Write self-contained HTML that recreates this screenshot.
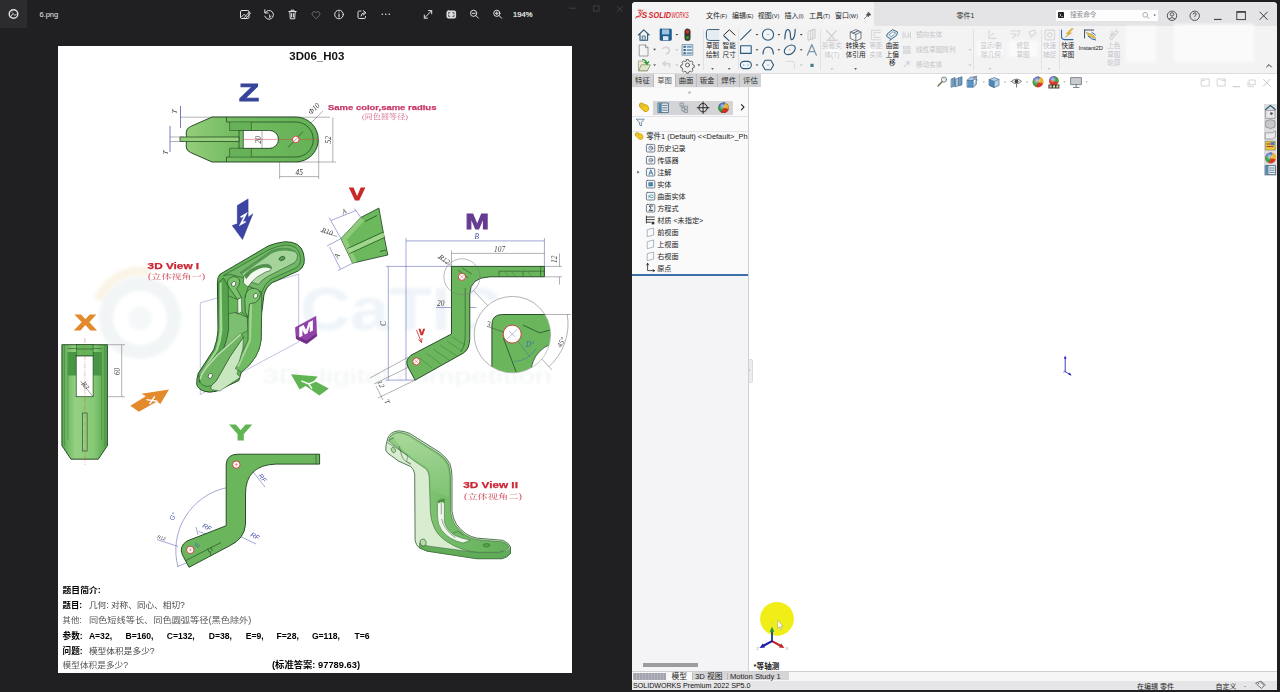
<!DOCTYPE html>
<html lang="zh">
<head>
<meta charset="utf-8">
<title>6.png</title>
<style>
html,body{margin:0;padding:0;background:#1f1f22;}
body{width:1280px;height:692px;overflow:hidden;position:relative;font-family:"Liberation Sans","Noto Sans CJK SC",sans-serif;}
.abs{position:absolute;}
#photos{position:absolute;left:0;top:0;width:632px;height:692px;background:#202023;overflow:hidden;}
#ptab{position:absolute;left:0;top:0;width:27px;height:28px;background:#2c2c2f;}
#pname{position:absolute;left:39.4px;top:9.8px;font-size:7.5px;color:#e8e8e8;letter-spacing:0;}
.pico{position:absolute;top:8px;width:14px;height:14px;}
.pico svg{width:14px;height:14px;display:block;fill:none;stroke:#e4e4e4;stroke-width:1.1;stroke-linecap:round;stroke-linejoin:round;}
#pzoom{position:absolute;left:513px;top:9.8px;font-size:7.6px;color:#f0f0f0;-webkit-text-stroke:0.2px #f0f0f0;}
#page{position:absolute;left:58px;top:46px;width:514px;height:627px;background:#fff;overflow:hidden;}
#sw{position:absolute;left:632px;top:2px;width:645px;height:688px;background:#fff;border-radius:4px 4px 0 0;overflow:hidden;}

#sw{font-family:"Liberation Sans","Noto Sans CJK SC",sans-serif;color:#222;}
#sw .t{position:absolute;white-space:nowrap;line-height:1;}
#swtitle{position:absolute;left:0;top:0;width:645px;height:24px;background:#e4e4e6;}
#swmenu{position:absolute;left:0;top:0;width:242px;height:24px;background:#f4f4f5;}
#swrib{position:absolute;left:0;top:24px;width:645px;height:47.5px;background:#f3f3f4;border-bottom:1px solid #dcdcde;box-sizing:border-box;}
.mn{font-size:7px;top:10.4px;color:#222;}
.mn small{font-size:5.6px;}
.rl{font-size:6.6px;color:#1c1c1c;text-align:center;transform:translateX(-50%);line-height:8.2px !important;}
.rg{color:#c4c4c8 !important;}
.sep{position:absolute;top:27px;width:1px;height:41px;background:#e2e2e4;}
.dd{position:absolute;width:0;height:0;border-left:1.6px solid transparent;border-right:1.6px solid transparent;border-top:1.8px solid #333;}
#swtabs{position:absolute;left:0;top:71.5px;width:129px;height:13px;background:#d2d2d4;}
#swtabs .tb{position:absolute;top:0;height:13px;font-size:7.4px;line-height:13.6px;text-align:center;color:#2a2a2a;border-right:1px solid #bcbcc0;box-sizing:border-box;}
#fm{position:absolute;left:0;top:84.5px;width:116px;height:584px;background:#f4f4f6;border-right:1px solid #d0d0d4;}
#fmtop{position:absolute;left:0;top:0;width:116px;height:187px;background:#fafafb;}
.ti{position:absolute;left:25.2px;font-size:7.15px;line-height:1;color:#222;white-space:nowrap;}
.tic{position:absolute;left:14.5px;width:8px;height:8px;box-sizing:border-box;border:1px solid #4a5a6a;border-radius:1.5px;background:#eef3f8;}
#swbot{position:absolute;left:0;top:669px;width:645px;height:9.6px;background:#f6f6f7;border-top:1px solid #cfcfd2;box-sizing:border-box;}
#swstat{position:absolute;left:0;top:678.6px;width:645px;height:9.4px;background:#e6e6e8;}
</style>
</head>
<body>
<!-- ================= PHOTOS WINDOW ================= -->
<div id="photos">
  <div id="ptab"></div>
  <svg class="abs" style="left:0;top:0" width="632" height="46" viewBox="0 0 632 46" fill="none" stroke="#e2e2e2" stroke-width="1" stroke-linecap="round" stroke-linejoin="round">
  <!-- app icon -->
  <circle cx="13.5" cy="14" r="4.3" stroke-width="1.4"/>
  <path d="M10.5 17 L13 13.5 L15 15.5 L16.5 14 M12 12 h0.1" stroke-width="0.9"/>
  <!-- edit image -->
  <rect x="240.5" y="10.5" width="8.5" height="8" rx="1.3"/>
  <path d="M241.5 17 L244 14.2 L246 16.2 M245.5 18.8 L250.5 13.2 L249.2 12 L244.4 17.4 Z" stroke-width="0.9"/>
  <!-- rotate -->
  <path d="M265.2 12.6 A4.4 4.4 0 1 1 264.8 16.2 M264.8 9.8 V13 H268"/>
  <path d="M269.6 14.8 V17.6 L271.2 16.2" stroke-width="0.9"/>
  <!-- trash -->
  <path d="M288.8 11.5 H296.2 M291 11.5 V10.2 H294 V11.5 M289.8 11.5 L290.3 18.8 H294.7 L295.2 11.5 M291.6 13.5 V17 M293.4 13.5 V17"/>
  <!-- heart (dim) -->
  <path d="M316 18.6 L312.5 15.2 A2.1 2.1 0 0 1 316 12.6 A2.1 2.1 0 0 1 319.5 15.2 Z" stroke="#6a6a6e"/>
  <!-- info -->
  <circle cx="339" cy="14.5" r="4.3"/>
  <path d="M339 14 V17 M339 12 v0.1" stroke-width="1.1"/>
  <!-- share -->
  <path d="M361 11 H359.3 Q358 11 358 12.3 V17.2 Q358 18.5 359.3 18.5 H364.2 Q365.5 18.5 365.5 17.2 V16.5"/>
  <path d="M361 16 Q361.3 12.8 364.3 12.8 M363.2 10.6 L366 12.8 L363.2 15"/>
  <!-- more -->
  <g fill="#e2e2e2" stroke="none"><circle cx="382.3" cy="14.3" r="0.8"/><circle cx="385.8" cy="14.3" r="0.8"/><circle cx="389.3" cy="14.3" r="0.8"/></g>
  <!-- expand -->
  <path d="M424.5 18 L431.5 10.8 M428.5 10.6 H431.7 V13.8 M424.3 15 V18.2 H427.5"/>
  <!-- fit -->
  <rect x="447" y="11" width="8.6" height="7" rx="1.2" fill="#dcdcdc"/>
  <path d="M448.6 13.8 V12.6 H449.8 M454 15.2 V16.4 H452.8 M452.8 12.6 H454 V13.8 M448.6 15.2 V16.4 H449.8" stroke="#222" stroke-width="0.7"/>
  <!-- zoom out -->
  <circle cx="473.6" cy="13.3" r="3.1"/><path d="M475.9 15.6 L478.4 18.2 M472.2 13.3 H475"/>
  <!-- zoom in -->
  <circle cx="496.8" cy="13.3" r="3.1"/><path d="M499.1 15.6 L501.6 18.2 M495.4 13.3 H498.2 M496.8 11.9 V14.7"/>
  <!-- window controls (dim) -->
  <g stroke="#424246" stroke-width="0.9">
    <path d="M569.5 8.2 H575.5"/>
    <rect x="593.8" y="5.8" width="5.4" height="5.4"/>
    <path d="M617 6.2 L622.4 11.6 M622.4 6.2 L617 11.6"/>
  </g>
</svg>

  <div id="pname">6.png</div>
  <div id="pzoom">194%</div>
  <div id="page">
  <svg class="abs" style="left:0;top:0" width="514" height="627" viewBox="58 46 514 627">
<defs>
<linearGradient id="gz" x1="0" y1="0" x2="1" y2="0"><stop offset="0" stop-color="#8fd070"/><stop offset="0.35" stop-color="#6cbf56"/><stop offset="1" stop-color="#5bb54a"/></linearGradient>
<linearGradient id="gx" x1="0" y1="0" x2="1" y2="0"><stop offset="0" stop-color="#4fae44"/><stop offset="0.3" stop-color="#8fd47a"/><stop offset="0.7" stop-color="#7fcc6a"/><stop offset="1" stop-color="#4aa840"/></linearGradient>
<filter id="soft" x="-2%" y="-2%" width="104%" height="104%" color-interpolation-filters="sRGB"><feGaussianBlur stdDeviation="0.35"/><feColorMatrix type="saturate" values="0.86"/></filter>
<filter id="wm" x="-5%" y="-5%" width="110%" height="110%"><feGaussianBlur stdDeviation="1.6"/></filter>
</defs>
<!-- watermark -->
<g filter="url(#wm)" opacity="0.55">
  <circle cx="140" cy="318" r="34" fill="none" stroke="#e6eef0" stroke-width="14"/>
  <circle cx="140" cy="318" r="12" fill="#eef3f4"/>
  <path d="M98 300 A46 46 0 0 1 150 272" fill="none" stroke="#f6ecd2" stroke-width="9"/>
  <text x="300" y="330" font-family="Liberation Sans, sans-serif" font-weight="bold" font-size="62" fill="#e3ecf4" textLength="240" lengthAdjust="spacingAndGlyphs">CaTICs</text>
  <text x="262" y="383" font-family="Liberation Sans, sans-serif" font-size="21" fill="#e6eaee" textLength="290" lengthAdjust="spacingAndGlyphs">3D digital competition</text>
</g>
<g filter="url(#soft)">
<!-- title -->
<text x="316.8" y="59.6" text-anchor="middle" font-family="Liberation Sans, sans-serif" font-weight="bold" font-size="11.2" fill="#111" textLength="55" lengthAdjust="spacingAndGlyphs">3D06_H03</text>

<!-- ===== Z view ===== -->
<text x="239" y="100.6" font-family="Liberation Sans, sans-serif" font-weight="bold" font-size="24.4" fill="#3344a8" stroke="#3344a8" stroke-width="1" textLength="20" lengthAdjust="spacingAndGlyphs">Z</text>
<g stroke="#555" stroke-width="0.45" fill="none">
  <!-- dimension lines -->
  <path d="M180 117.2 H330 M296 162 H336 M332.8 117.5 V162"/>
  <path d="M279.6 150 V179 M318.7 140 V179 M279.6 176.6 H318.7"/>
  <path d="M300 134 L316 118 L323 111"/>
  <path d="M170 137 H184 M170 141.5 H184"/>
</g>
<g stroke="#3848b0" stroke-width="0.7" fill="none">
  <path d="M180.5 106 V128 M170 126 V152"/>
</g>
<path d="M212 117 H295.8 A22.5 22.5 0 0 1 295.8 162 H212 L190.5 152.5 Q186.3 150.5 186.3 147 V132 Q186.3 128.5 190.5 126.5 Z" fill="url(#gz)" stroke="#17401a" stroke-width="0.9"/>
<path d="M226.5 122 H295.8 A17.5 17.5 0 0 1 295.8 157 H226.5" fill="none" stroke="#17401a" stroke-width="0.7"/>
<path d="M226.5 117 V122 M226.5 157 V162 M229.7 122 V130.5 H239 M229.7 157 V148.3 H239 M251.2 122 V130.5 M251.2 157 V148.3" fill="none" stroke="#17401a" stroke-width="0.7"/>
<rect x="229.7" y="122" width="21.5" height="8.5" fill="#55b048" opacity="0.6"/>
<rect x="229.7" y="148.3" width="21.5" height="8.7" fill="#55b048" opacity="0.6"/>
<path d="M239 130.5 H269.5 A8.9 8.9 0 0 1 269.5 148.3 H239 Z" fill="#6cc05a" stroke="#17401a" stroke-width="0.7"/>
<path d="M243.3 130.5 H269.5 A8.9 8.9 0 0 1 269.5 148.3 H243.3 Z" fill="#fff" stroke="#17401a" stroke-width="0.7"/>
<rect x="180" y="137" width="59" height="4.5" fill="#8ed272" stroke="#17401a" stroke-width="0.7"/>
<path d="M243 139.4 H319" stroke="#e04040" stroke-width="0.5"/>
<path d="M288 147.5 L303 131.5" stroke="#17401a" stroke-width="0.6"/>
<circle cx="295.8" cy="139.4" r="3.3" fill="#fff" stroke="#e03030" stroke-width="0.9"/>
<path d="M293.8 141.4 L297.8 137.4" stroke="#e03030" stroke-width="0.6"/>
<path d="M262 131 V148" stroke="#333" stroke-width="0.4"/>
<g font-family="Liberation Serif, serif" font-style="italic" font-size="7.4" fill="#333">
  <text x="295.5" y="174.6">45</text>
  <text transform="translate(331 143.5) rotate(-90)">52</text>
  <text transform="translate(260.6 143.5) rotate(-90)">20</text>
  <text transform="translate(311 115) rotate(-45)">Φ10</text>
  <text transform="translate(176.5 114) rotate(-80)">T</text>
  <text transform="translate(167.5 155) rotate(-80)">T</text>
</g>
<text x="328" y="110.2" font-family="Liberation Sans, sans-serif" font-weight="bold" font-size="7.8" fill="#d8336c" stroke="#d8336c" stroke-width="0.25" textLength="108.4" lengthAdjust="spacingAndGlyphs">Same color,same radius</text>
<text x="362" y="119.4" font-family="Liberation Serif, 'Noto Serif CJK SC', serif" font-size="6.6" fill="#e0608c" textLength="46" lengthAdjust="spacingAndGlyphs">(同色圆等径)</text>
<!-- ===== V letter & view ===== -->
<text x="349.4" y="199.8" font-family="Liberation Sans, sans-serif" font-weight="bold" font-size="17.4" fill="#e02222" stroke="#e02222" stroke-width="0.9" textLength="15.2" lengthAdjust="spacingAndGlyphs">V</text>
<g stroke="#4450b8" stroke-width="0.5" fill="none">
  <path d="M341 238.6 L329 217.5 M360.8 217.5 L354.5 208.5 M331 220.5 L356 210.5"/>
  <path d="M341 238.6 L327 246 M352.6 263.2 L338 270.5 M329.5 247 L340.5 269"/>
</g>
<path d="M320 231 L337 236.5" stroke="#333" stroke-width="0.45"/>
<path d="M378.9 208.1 L360.8 217.5 L341 238.6 L352.6 263.2 L366 260 L387.8 255 Q383 232 378.9 208.1 Z" fill="#63bd52" stroke="#17401a" stroke-width="0.8"/>
<path d="M360.8 217.5 L341 238.6 L352.6 263.2 L357 262 L347 239.5 L364 221 Z" fill="#8ed276" opacity="0.8"/>
<path d="M347.5 248.5 L383.5 232 M349.5 253.5 L384.5 237.5" stroke="#17401a" stroke-width="0.7" fill="none"/>
<path d="M347.8 249 L383.8 232.5 L384.3 237 L349.4 253 Z" fill="#a5e090" opacity="0.8"/>
<path d="M365 221.5 L377 215.5 M380 251.5 L386 250" stroke="#17401a" stroke-width="0.7"/>
<g font-family="Liberation Serif, serif" font-style="italic" font-size="7.2" fill="#444">
  <text transform="translate(343 214.5) rotate(-24)">A</text>
  <text transform="translate(321 232) rotate(18)">R10</text>
  <text transform="translate(338 259) rotate(-62)">A</text>
</g>

<!-- ===== Z arrow (blue) ===== -->
<path d="M248.1 198.9 L237.3 205.5 L237.3 223.75 L232.2 225.6 L242.5 239.5 L252.8 213.9 L248.1 217.2 Z" fill="#3a44b0" stroke="#2c369c" stroke-width="0.5" stroke-linejoin="round"/>
<path d="M240.6 217.2 L245.8 214.2 L240.8 224.2 L245.6 221.6" fill="none" stroke="#fff" stroke-width="1.7"/>

<!-- ===== 3D View I label ===== -->
<text x="147.6" y="269" font-family="Liberation Sans, sans-serif" font-weight="bold" font-size="8.6" fill="#e02030" stroke="#e02030" stroke-width="0.25" textLength="51.5" lengthAdjust="spacingAndGlyphs">3D View I</text>
<text x="148" y="278.8" font-family="Liberation Serif, 'Noto Serif CJK SC', serif" font-size="7.4" fill="#e04050" textLength="57" lengthAdjust="spacingAndGlyphs">(立体视角一)</text>

<!-- plane outline -->
<path d="M200.3 302.9 V394.5 L298.7 341.9 V274.2 Z" fill="none" stroke="#7078c0" stroke-width="0.45"/>

<!-- ===== 3D View I body ===== -->
<path d="M219.8 274.4 L268.7 245.7 Q277 242.5 285.4 241.7 Q293 241.8 297.3 244.5 Q302 247.5 303.3 252.9 Q305 259 304 263.6 Q302.5 268.5 298.5 270.8 L272.3 282.7 Q266 287 264 294.6 L261.6 313.7 L261.1 340 Q260 349.5 255.6 356.7 Q250 366 241.3 372.2 L238.9 380.5 L216.2 391.3 Q209 393 204.3 391.3 Q197.5 389 196.7 384.1 Q196.5 378 198.3 373.4 L213.9 349.5 Q217.5 340.5 218.1 330.4 L217.4 282.7 Q217.5 277 219.8 274.4 Z" fill="#5cb84e" stroke="#17401a" stroke-width="0.9"/>
<!-- top face of arm -->
<path d="M223.4 275.6 L269.9 249.3 Q278 245.8 285.4 245 Q291.5 245 295 247.4 Q299 250 299.7 254.1 Q301 259 300.2 262.4 Q299 266 296.2 267.9 L271.1 279.1 Q264.5 284 261.6 292.3 L248.4 286.3 L243.7 277.9 L230.6 274.4 Z" fill="#6ab95e" stroke="#17401a" stroke-width="0.5"/>
<!-- recessed floor -->
<path d="M240.1 272.7 L271.3 250.9 Q277 248.5 283 248.3 Q290.5 248.3 294.4 250.9 Q297.6 253 297.6 255.8 Q297.6 260 294.4 262.8 L267.4 276.6 Q262 279.5 258.5 284.5 L250 281.5 L244 276.5 Z" fill="#9fd692" stroke="#17401a" stroke-width="0.5"/>
<path d="M240.1 272.7 L271.3 250.9 Q277 248.5 283 248.3 Q290.5 248.3 294.4 250.9 Q296 252 296.8 253.3 Q292 250.6 284 250.6 Q277.5 250.8 272 253.2 L242.2 274.2 Z" fill="#4d9e48"/>
<!-- slot opening -->
<path d="M244 275.3 Q249 269.5 255.7 266.9 Q261 264.5 266.1 264.3 Q270.5 264.5 271.3 266.9 Q271.6 269.5 270 270.8 Q265.5 271.5 262.2 274 Q256 277 251.8 281.8 L247.9 287 L243.4 283 Z" fill="#f2f8ee" stroke="#17401a" stroke-width="0.55"/>
<path d="M244 275.3 Q249 269.5 255.7 266.9 Q261 264.5 266.1 264.3 Q270.5 264.5 271.3 266.9 Q271.5 268 271.2 269 Q268 266.8 262.5 267.8 Q255.5 269.5 250.5 274 L246.2 279.2 Z" fill="#44963f"/>
<!-- left rail -->
<path d="M218.1 282.7 L223.4 277.9 L228.2 286.3 L228.6 330.4 Q227 341 223.4 349.5 L204.3 378.1 L199.5 382.9 L198.3 373.4 L213.9 349.5 Q217.5 340.5 218.1 330.4 Z" fill="#4ba642" stroke="#17401a" stroke-width="0.5"/>
<path d="M219.6 283.5 L221.6 281.5 L222.4 330.5 Q221.5 341 218 350 L201 376 L200 374 L215.6 350 Q219 340.5 219.6 330.4 Z" fill="#9edb8c"/>
<!-- inner pocket -->
<path d="M228.6 313.7 L235.3 312.5 L247.3 317.3 L248 330.4 L241.3 334 L215 361.4 L204.3 378.1 L223.4 349.5 Q227 341 228.6 330.4 Z" fill="#76c266" stroke="#17401a" stroke-width="0.45"/>
<!-- lower lightest face -->
<path d="M243.4 337 L242.9 348.1 L238.6 368.8 L236.9 373.9 L240.3 377.3 L219.7 391.1 L211.1 389.4 L211.1 385.9 L216.3 380.8 L230 356.7 Z" fill="#c6e8ba" stroke="#17401a" stroke-width="0.45"/>
<!-- diagonal band with lug -->
<path d="M240.3 333.5 L243.4 337 L230 356.7 L216.3 380.8 L211.1 385.9 Q205.5 387.5 202.5 385.1 Q199.5 382.5 199.4 379.1 Q200.5 373.5 204.2 368.8 L216.3 355 Z" fill="#68b85a" stroke="#17401a" stroke-width="0.5"/>
<path d="M240.3 333.5 L241.4 334.8 L217.6 356 L205.6 369.8 Q202 374.5 201 379.5 L199.4 379.1 Q200.5 373.5 204.2 368.8 L216.3 355 Z" fill="#b4e0a4"/>
<!-- right rail -->
<path d="M248.4 286.3 L261.6 292.3 L261.6 313.7 L261.1 340 Q260 349.5 255.6 356.7 Q250 366 241.3 372.2 L235.3 368.6 Q240 362 241.3 354.3 L248 340 L248 317.3 L245.3 297 Z" fill="#68be58" stroke="#17401a" stroke-width="0.5"/>
<path d="M250 288.5 L252.5 289.5 L251 340.5 L244 356 L239 367 L237 366 Q241 360 242.5 354.5 L249.2 340 L249.3 317 Z" fill="#a4dd92" opacity="0.85"/>
<!-- lugs -->
<path d="M227.5 281.5 Q229.5 276.5 234.5 276.6 Q239.5 277.5 239.8 282 Q239.5 286 236.5 288.5 L241.5 297.5 L237.5 299.5 L229.5 288 Q227 285 227.5 281.5 Z" fill="#72c660" stroke="#17401a" stroke-width="0.6"/>
<path d="M246 293.5 Q248.5 288 254.5 288.3 Q260 289.5 260.5 294.5 Q260 300 255.5 302.5 L249.5 304 L248 317.3 L245.3 312 L244.8 299.5 Z" fill="#72c660" stroke="#17401a" stroke-width="0.6"/>
<ellipse cx="233.7" cy="283.9" rx="2" ry="2.6" fill="#f4faf0" stroke="#17401a" stroke-width="0.6" transform="rotate(25 233.7 283.9)"/>
<ellipse cx="255.6" cy="295.8" rx="2" ry="2.6" fill="#f4faf0" stroke="#17401a" stroke-width="0.6" transform="rotate(25 255.6 295.8)"/>
<ellipse cx="282" cy="258.5" rx="3" ry="1.9" fill="#4aa63e" stroke="#17401a" stroke-width="0.6" transform="rotate(-22 282 258.5)"/>
<!-- middle slot -->
<path d="M237.7 299.4 L241.3 297.5 L241.8 312 L237.9 313.7 Z" fill="#e6f3e0" stroke="#17401a" stroke-width="0.5"/>
<path d="M228.6 296 L237.7 299.4 M237.9 313.7 L235.3 312.5 M241.8 312 L247.3 317.3" stroke="#17401a" stroke-width="0.5" fill="none"/>
<ellipse cx="210.3" cy="375.9" rx="1.9" ry="2.7" fill="#f4faf0" stroke="#17401a" stroke-width="0.6" transform="rotate(30 210.3 375.9)"/>

<!-- ===== X letter ===== -->
<text x="74.9" y="330.2" font-family="Liberation Sans, sans-serif" font-weight="bold" font-size="22" fill="#f0881c" stroke="#f0881c" stroke-width="1.1" textLength="20.8" lengthAdjust="spacingAndGlyphs">X</text>
<!-- M hex label -->
<path d="M295.3 327.5 L315.9 316.3 L316.8 336.1 L306.5 343.8 L296.2 338.7 Z" fill="#9b3fb5" stroke="#8a32a4" stroke-width="0.5" stroke-linejoin="round"/>
<path d="M296.2 338.7 L306.5 343.8 L316.8 336.1 L316.6 333.5 L306.5 340.6 L296 335.8 Z" fill="#7a2a94"/>
<g transform="translate(298.6 337.4) skewY(-27)"><text x="0" y="0" font-family="Liberation Sans, sans-serif" font-weight="bold" font-size="14" fill="#fff" stroke="#fff" stroke-width="0.5" textLength="15.2" lengthAdjust="spacingAndGlyphs">M</text></g>
<!-- orange X arrow -->
<path d="M130.3 405.7 L145.8 396.3 L141.5 393.7 L169 389.4 L160.4 404 L157 401.4 L138.9 411.7 Z" fill="#f0881c"/>
<path d="M146.5 399.6 L157.6 401.2 M154.8 396.4 L149.6 404" stroke="#fff" stroke-width="1.4" fill="none"/>
<!-- green Y arrow -->
<path d="M291 374.3 L317.7 376.5 L314.2 380.8 L328.8 388.5 L319.4 395.4 L305.6 385.9 L299.6 389.4 Z" fill="#58b848"/>
<path d="M301.4 380.8 L308.8 384 L315.6 381.2 M308.8 384 L312 388.6" stroke="#fff" stroke-width="1.4" fill="none"/>
<!-- ===== X view ===== -->
<g stroke="#555" stroke-width="0.45" fill="none">
  <path d="M107 344.7 H125 M93 396.7 H125 M121.7 344.7 V396.7"/>
</g>
<path d="M61.9 344.7 H107.4 V445.6 L98.3 459.2 H71 L61.9 445.6 Z" fill="url(#gx)" stroke="#17401a" stroke-width="0.9" stroke-linejoin="round"/>
<path d="M64.5 345 V446 M104.8 345 V446 M67.8 352 V440 M101.6 352 V440" stroke="#2a6a2a" stroke-width="0.45" fill="none" opacity="0.8"/>
<rect x="67.8" y="352" width="8.4" height="23.5" fill="#3f9a3a"/>
<rect x="93.1" y="352" width="8.5" height="23.5" fill="#3f9a3a"/>
<rect x="76.2" y="344.7" width="16.9" height="11.3" fill="#5cb850" stroke="#17401a" stroke-width="0.5"/>
<path d="M76.2 349 H93.1 M67.8 348.5 H76.2 M93.1 348.5 H101.6" stroke="#17401a" stroke-width="0.5"/>
<rect x="76.2" y="356" width="16.9" height="40.7" fill="#fff" stroke="#17401a" stroke-width="0.7"/>
<rect x="82.7" y="413" width="4.4" height="38" fill="#8fd47a" stroke="#17401a" stroke-width="0.6"/>
<path d="M84.9 338 V465" stroke="#e05050" stroke-width="0.4" stroke-dasharray="5 1.2 1 1.2"/>
<path d="M80.5 381 L92.5 396" stroke="#333" stroke-width="0.45"/>
<g font-family="Liberation Serif, serif" font-style="italic" font-size="7.2" fill="#444">
  <text transform="translate(120.3 375) rotate(-90)">60</text>
  <text transform="translate(81 384) rotate(50)">R3</text>
</g>
<!-- ===== M view ===== -->
<text x="465.2" y="229.4" font-family="Liberation Sans, sans-serif" font-weight="bold" font-size="22.2" fill="#6a3a9c" stroke="#6a3a9c" stroke-width="0.9" textLength="23.8" lengthAdjust="spacingAndGlyphs">M</text>
<g stroke="#4450b8" stroke-width="0.5" fill="none">
  <path d="M406 240.9 H544.4 M406 238 V380 M544.4 238 V266.4"/>
  <path d="M388.3 266.4 V380.1 M386 266.4 H451.5 M386 380.1 H415"/>
  <path d="M435.9 307.5 H451.5 M469.8 307.5 H476.5"/>
</g>
<g stroke="#555" stroke-width="0.45" fill="none">
  <path d="M451.5 253.4 H544.4 M451.5 250.5 V266.4"/>
  <path d="M544.4 266.4 H562 M544.4 276.8 H562 M559.5 253.4 V266.4 M559.5 276.8 V284.6"/>
  <path d="M437 257 L452 266"/>
  <path d="M407.9 357.4 L370 378 M415.9 379.7 L378 398 M412 365.5 L374 384 M376 386 L383 400"/>
  <path d="M473.5 290.6 L488 306"/>
  <path d="M525.7 314.5 H571 M541 358 L552 370"/>
  <path d="M567.3 314.5 A58 58 0 0 1 548.9 366.7"/>
</g>
<!-- body -->
<path d="M451.5 266.4 H544.4 V276.8 H490 Q469.8 277.5 469.8 294 V338.5 Q469.5 349.5 463.2 353.2 L415.1 380.1 L408 367 Q404.5 360.5 411 355.2 L451.5 334 Z" fill="#62ba52" stroke="#17401a" stroke-width="0.9" stroke-linejoin="round"/>
<path d="M465.2 288 V337 Q464.8 347 460.5 352" fill="none" stroke="#17401a" stroke-width="0.5"/>
<path d="M499 271.2 H544.4 M499 271.2 V276.8 M540.6 266.4 V276.8 M523 271.2 V276.8" stroke="#17401a" stroke-width="0.5" fill="none"/>
<path d="M458 270 L468.4 278 M462 268 L472 274" stroke="#17401a" stroke-width="0.5"/>
<g stroke="#2c6a2c" stroke-width="0.45" opacity="0.85">
  <path d="M420 358 L432 368 M426 353 L441 364 M433 349 L449 360 M440 345 L457 356 M447 341 L462 351 M452 337 L465 345"/>
  <path d="M505 272 L509 277 M512 272 L516 277 M528 272 L532 277"/>
</g>
<circle cx="461.9" cy="276.8" r="18" fill="none" stroke="#777" stroke-width="0.5"/>
<circle cx="461.9" cy="276.8" r="3.6" fill="#fff" stroke="#e03030" stroke-width="0.9"/>
<path d="M459.9 278.8 L463.9 274.8 M459.9 274.8 L463.9 278.8" stroke="#e03030" stroke-width="0.4"/>
<circle cx="416.4" cy="361.4" r="3.6" fill="#fff" stroke="#e03030" stroke-width="0.9"/>
<path d="M414.4 363.4 L418.4 359.4 M414.4 359.4 L418.4 363.4" stroke="#e03030" stroke-width="0.4"/>
<!-- small red v arrow -->
<text x="418.8" y="335" font-family="Liberation Sans, sans-serif" font-weight="bold" font-size="11" fill="#e02222" stroke="#e02222" stroke-width="0.4">v</text>
<path d="M416.5 330 L421.5 342.5 M421.5 342.5 L418.3 339.5 M421.5 342.5 L422 338" stroke="#e02222" stroke-width="0.8" fill="none"/>
<!-- detail circle -->
<clipPath id="dc"><circle cx="512.4" cy="334.6" r="38"/></clipPath>
<circle cx="512.4" cy="334.6" r="38.2" fill="#fff" stroke="#777" stroke-width="0.55"/>
<g clip-path="url(#dc)">
  <path d="M491.9 380 V325 Q491.9 314.5 502.3 314.5 H560 V380 Z" fill="#62ba52" stroke="#17401a" stroke-width="0.9"/>
  <circle cx="561" cy="372.5" r="30" fill="#fff" stroke="#17401a" stroke-width="0.7"/>
  <path d="M503.4 338.1 L516.4 372.7 M523 325.1 L539.8 332.9 L552 329.5" fill="none" stroke="#17401a" stroke-width="0.7"/>
  <path d="M512.2 334 L530 357" stroke="#4450b8" stroke-width="0.4"/>
  <path d="M514 361.5 A28 28 0 0 0 536.5 348" fill="none" stroke="#3070c0" stroke-width="0.5"/>
</g>
<circle cx="512.2" cy="334.1" r="9" fill="#fff" stroke="#e03030" stroke-width="0.9"/>
<path d="M507 339.1 L517.5 329.1 M509 331.1 L515.5 337.1" stroke="#5560c0" stroke-width="0.4"/>
<path d="M487.5 326.5 L503.5 332" stroke="#333" stroke-width="0.45"/>
<g font-family="Liberation Serif, serif" font-style="italic" font-size="7.4" fill="#444">
  <text x="474.5" y="238.5" fill="#4450b8">B</text>
  <text x="494" y="252.3">107</text>
  <text transform="translate(557 263) rotate(-90)">12</text>
  <text transform="translate(438 258) rotate(35)">R12</text>
  <text x="437" y="306">20</text>
  <text transform="translate(386 326) rotate(-90)">C</text>
  <text transform="translate(561 348) rotate(-62)">45°</text>
  <text x="526" y="347" fill="#3070c0">D°</text>
  <text x="487" y="327">3</text>
  <text transform="translate(377 382) rotate(62)">12</text>
  <text transform="translate(384 401) rotate(62)">T</text>
</g>
<!-- ===== Y view ===== -->
<text x="230" y="440.2" font-family="Liberation Sans, sans-serif" font-weight="bold" font-size="22" fill="#58b848" stroke="#58b848" stroke-width="1.1" textLength="21.4" lengthAdjust="spacingAndGlyphs">Y</text>
<g stroke="#4450b8" stroke-width="0.5" fill="none">
  <path d="M226.2 487.8 A64 64 0 0 0 178 567"/>
  <path d="M177.5 566.5 L189 562 M196 527 L198 535 M251.5 470 L265 487 M240.5 536.5 L256 544 M198.5 531.5 L222 539"/>
  <path d="M157 539.5 L178 546.5"/>
</g>
<path d="M245.8 454.2 H319.6 V464.1 H276 Q245.5 465 245.5 494 V524.4 Q244.5 538.5 230 545.6 L189 567.3 L182.5 555 Q178.5 546.5 187 541 L226.2 525.7 V464 Q227 454.2 238 454.2 Z" fill="#62ba52" stroke="#17401a" stroke-width="0.9" stroke-linejoin="round"/>
<path d="M316 454.2 V464.1" stroke="#17401a" stroke-width="0.5"/>
<path d="M186 560.5 L221 542.5 M209.5 552.5 L207.5 548.5 M212.5 551 L210.5 547 M210 551 L211 556" stroke="#17401a" stroke-width="0.6" fill="none"/>
<circle cx="236.3" cy="464.6" r="3.7" fill="#fff" stroke="#e03030" stroke-width="0.9"/>
<path d="M234.5 464.6 H238.1 M236.3 462.8 V466.4" stroke="#e03030" stroke-width="0.4"/>
<circle cx="190.3" cy="549.9" r="3.7" fill="#fff" stroke="#e03030" stroke-width="0.9"/>
<path d="M188.5 549.9 H192.1 M190.3 548.1 V551.7" stroke="#e03030" stroke-width="0.4"/>
<g font-family="Liberation Sans, sans-serif" font-style="italic" font-size="6.6" fill="#4450b8">
  <text transform="translate(258 476) rotate(50)">RF</text>
  <text transform="translate(202 527) rotate(28)">RF</text>
  <text transform="translate(250 536) rotate(28)">RF</text>
  <text transform="translate(173 521) rotate(-60)">G°</text>
  <text transform="translate(198 548) rotate(-62)" fill="#3070c0">E</text>
  <text transform="translate(157 538) rotate(18)" font-size="4.6" fill="#444">R12</text>
</g>

<!-- ===== 3D View II ===== -->
<defs>
<linearGradient id="g3b" x1="0" y1="0" x2="1" y2="0"><stop offset="0" stop-color="#8ad07a"/><stop offset="0.5" stop-color="#6cc05e"/><stop offset="1" stop-color="#5cb450"/></linearGradient>
<linearGradient id="g3c" x1="0" y1="0" x2="0" y2="1"><stop offset="0" stop-color="#a8dc98"/><stop offset="1" stop-color="#78c86a"/></linearGradient>
</defs>
<!-- silhouette: light side face colour -->
<path d="M386.9 441.7 Q388 435.5 391.3 433.4 Q394.5 431 398.8 430.8 Q404 431 409.7 433.4 L440 452.5 Q446.5 457.5 449.8 463.4 Q452 469.5 452 476.4 V511 Q452.8 518.5 456.3 524 Q460.5 530 466 533.8 Q471 537 476.9 538.1 L502.9 540.3 Q508.5 542.5 510.5 546.8 V553.3 Q507.5 557.5 501.8 558.7 H476.9 L427 551.1 L419.4 547.9 Q415.8 545 415.1 540.3 L414.7 474.2 Q414 469 410.8 466.6 L398.8 461.2 L391.3 455.8 Q387 453.5 385.8 450.3 Q385.5 445.5 386.9 441.7 Z" fill="#d6edcc" stroke="#2a5a2a" stroke-width="0.8" stroke-linejoin="round"/>
<!-- main top/front face -->
<path d="M388.6 441 Q389.5 436.5 392 434.8 Q395 432.5 398.8 432.3 Q403.5 432.5 409 435 L439 453.8 Q445.5 458.5 448.4 464 Q450.5 470 450.5 476.4 V511 Q451.3 519 455 524.8 Q459.5 531 465.2 535 Q470.5 538.3 476.9 539.6 L502.5 541.8 Q507.5 543.5 509.2 547 Q505.5 551.5 499 552.3 H477 Q461 551 446.5 541.4 Q437.5 535 434.6 528.4 Q430.5 520 430.3 511 L429.2 476.4 Q428.5 471.5 425.9 468.8 L412.9 460.1 L403.2 452.5 Q396 446.5 388.6 441 Z" fill="url(#g3b)" stroke="#2a5a2a" stroke-width="0.5"/>
<!-- arm top highlight -->
<path d="M392 436 Q395.5 433.8 399 433.8 Q403.5 434 408.5 436.5 L438 455 Q444 459.5 446.8 464.8 Q448.8 470.5 448.9 476.4 L448.9 497 L431 490 L430.6 476 Q430 470.5 427 467.5 L414 458.8 L404.2 451.2 Z" fill="url(#g3c)" opacity="0.85"/>
<!-- base plate front edge -->
<path d="M419.4 547.9 L427 551.1 L476.9 558.7 H501.8 Q507.5 557.5 510.5 553.3 V547.4 Q507 551.8 499.5 552.6 H477 L428 546 L419.6 543 Z" fill="#58b04e" stroke="#2a5a2a" stroke-width="0.45"/>
<!-- slot -->
<path d="M437.4 501.3 Q440 498.5 444.4 499.1 V521.9 Q447 531 455 535.5 L461.7 538.1 L470.4 540.3 L463 543 Q449 540 441.5 530 Q437.5 524 437.4 516 Z" fill="#eef7ea" stroke="#2a5a2a" stroke-width="0.5"/>
<path d="M441.3 503 V514.5 M441.6 519 Q444 530 455.5 537.8 M453 533 L458.5 531.5 L463.5 535.5" fill="none" stroke="#2a5a2a" stroke-width="0.5"/>
<path d="M437.4 501.3 Q440 498.5 444.4 499.1 L444.4 503 Q441 501.5 438.8 503.5 Z" fill="#3f9a3a"/>
<!-- holes -->
<ellipse cx="423.1" cy="542.5" rx="3" ry="3.6" fill="#b4dea6" stroke="#2a5a2a" stroke-width="0.6" transform="rotate(-15 423.1 542.5)"/>
<ellipse cx="486.6" cy="545.3" rx="3.5" ry="1.7" fill="#4aa63e" stroke="#2a5a2a" stroke-width="0.5"/>
<ellipse cx="393.4" cy="450" rx="2" ry="2.8" fill="#a8d898" stroke="#2a5a2a" stroke-width="0.5" transform="rotate(-25 393.4 450)"/>
<!-- lug lines near cap -->
<path d="M387.2 442.5 Q396 447.5 403.2 452.5 M389 440.5 L394 437.5 M399 446 L402 456.5 Q404 461.5 410.8 463.5" fill="none" stroke="#2a5a2a" stroke-width="0.55"/>
<path d="M403.2 452.5 L408 455.5 L406.5 461.5 L410.8 464.5" fill="none" stroke="#2a5a2a" stroke-width="0.45"/>
<text x="463.3" y="488.4" font-family="Liberation Sans, sans-serif" font-weight="bold" font-size="8.6" fill="#e02030" stroke="#e02030" stroke-width="0.25" textLength="54.6" lengthAdjust="spacingAndGlyphs">3D View II</text>
<text x="464" y="499" font-family="Liberation Serif, 'Noto Serif CJK SC', serif" font-size="7.4" fill="#e04050" textLength="57.8" lengthAdjust="spacingAndGlyphs">(立体视角二)</text>
<!-- ===== bottom text ===== -->
<g font-family="'Liberation Sans','Noto Sans CJK SC',sans-serif" font-size="8.3" fill="#222">
  <text x="62.6" y="593" font-weight="bold" fill="#000" textLength="38" lengthAdjust="spacingAndGlyphs">题目简介:</text>
  <text x="62.6" y="608.2"><tspan font-weight="bold" fill="#000">题目:</tspan></text>
  <text x="88.9" y="608.2" fill="#444" textLength="96" lengthAdjust="spacingAndGlyphs">几何: 对称、同心、相切?</text>
  <text x="62.6" y="623.1" fill="#555">其他:</text>
  <text x="88.9" y="623.1" fill="#555" textLength="162.5" lengthAdjust="spacingAndGlyphs">同色短线等长、同色圆弧等径(黑色除外)</text>
  <g font-weight="bold" fill="#000" font-size="8.6">
    <text x="62.6" y="638.6">参数:</text>
    <text x="88.9" y="638.6">A=32,</text>
    <text x="125.5" y="638.6">B=160,</text>
    <text x="166.8" y="638.6">C=132,</text>
    <text x="208.8" y="638.6">D=38,</text>
    <text x="245.7" y="638.6">E=9,</text>
    <text x="276.6" y="638.6">F=28,</text>
    <text x="311.9" y="638.6">G=118,</text>
    <text x="354.5" y="638.6">T=6</text>
    <text x="62.6" y="653.5">问题:</text>
    <text x="272" y="668.2" textLength="88" lengthAdjust="spacingAndGlyphs">(标准答案: 97789.63)</text>
  </g>
  <text x="88.9" y="653.5" fill="#444" textLength="65.8" lengthAdjust="spacingAndGlyphs">模型体积是多少?</text>
  <text x="62.6" y="668.2" fill="#555" textLength="65.5" lengthAdjust="spacingAndGlyphs">模型体积是多少?</text>
</g>

</g>
</svg>

  </div>
</div>
<!-- ================= SOLIDWORKS WINDOW ================= -->
<div id="sw">
<div id="swtitle"></div>
<div id="swmenu"></div>
<!-- logo -->
<svg class="abs" style="left:2px;top:5px" width="58" height="14" viewBox="634 7 58 14">
  <path d="M637.8 10.2 H641.2 L638.8 12.9 Q641.4 13 641 15.3 Q640.2 17.6 636 16.8" fill="none" stroke="#d8232a" stroke-width="0.9"/>
  <path d="M635 18.4 Q640.5 16 643.2 9.6" fill="none" stroke="#d8232a" stroke-width="0.7"/>
  <text x="641.6" y="17.8" font-family="Liberation Sans, sans-serif" font-weight="bold" font-style="italic" font-size="8.6" fill="#d8232a">S</text>
  <text x="648.6" y="17.8" font-family="Liberation Sans, sans-serif" font-weight="bold" font-style="italic" font-size="8.4" fill="#d8232a" textLength="22.5" lengthAdjust="spacingAndGlyphs">SOLID</text>
  <text x="671.4" y="17.8" font-family="Liberation Sans, sans-serif" font-style="italic" font-size="8.4" fill="#d8232a" textLength="17.4" lengthAdjust="spacingAndGlyphs">WORKS</text>
</svg>
<div class="t mn" style="left:74px">文件<small>(F)</small></div>
<div class="t mn" style="left:100px">编辑<small>(E)</small></div>
<div class="t mn" style="left:125.8px">视图<small>(V)</small></div>
<div class="t mn" style="left:152.4px">插入<small>(I)</small></div>
<div class="t mn" style="left:177px">工具<small>(T)</small></div>
<div class="t mn" style="left:203px">窗口<small>(W)</small></div>
<svg class="abs" style="left:231px;top:9px" width="9" height="9" viewBox="0 0 9 9"><path d="M5.2 1 L8 3.8 L6.6 4 L5.2 5.8 L3.2 3.8 L5 2.4 Z M3.8 5.2 L1 8" fill="#555" stroke="#555" stroke-width="0.7"/></svg>
<div class="t" style="left:324.5px;top:10.4px;font-size:7px;color:#333">零件1</div>
<!-- search -->
<div class="abs" style="left:424.4px;top:7.8px;width:101.6px;height:11.4px;background:#fdfdfd;"></div>
<div class="abs" style="left:426.4px;top:10.3px;width:6px;height:6px;background:#222;border-radius:0.8px"></div>
<svg class="abs" style="left:426.4px;top:10.3px" width="6" height="6" viewBox="0 0 6 6"><path d="M1.5 1.6 L3 3 L1.5 4.4 M3.4 4.5 H4.8" stroke="#fff" stroke-width="0.7" fill="none"/></svg>
<div class="t" style="left:438px;top:10.2px;font-size:6.6px;color:#8a8a8e">搜索命令</div>
<svg class="abs" style="left:509px;top:9px" width="18" height="9" viewBox="0 0 18 9"><circle cx="4.2" cy="3.8" r="2.4" fill="none" stroke="#9a9aa0" stroke-width="0.8"/><path d="M6 5.6 L8 7.8" stroke="#9a9aa0" stroke-width="0.9"/><path d="M12.4 3.6 h2.6 l-1.3 1.6 Z" fill="#666"/></svg>
<!-- user / help / window buttons -->
<svg class="abs" style="left:530px;top:4px" width="114" height="20" viewBox="1162 6 114 20" fill="none" stroke="#444" stroke-width="0.9">
  <circle cx="1172" cy="15.8" r="4.7"/><circle cx="1172" cy="14.4" r="1.7"/><path d="M1168.8 19 Q1172 16 1175.2 19"/>
  <circle cx="1194.7" cy="15.8" r="4.7"/>
  <path d="M1193.2 14.4 Q1193.3 12.8 1194.8 12.8 Q1196.3 12.9 1196.2 14.2 Q1196.1 15 1194.8 15.8 V16.8 M1194.8 18.2 v0.3" stroke-width="1"/>
  <path d="M1214 19.4 H1221.6" stroke="#333" stroke-width="1"/>
  <rect x="1236.8" y="11.6" width="8.6" height="8" stroke="#333"/><path d="M1236.8 12.2 H1245.4" stroke="#333" stroke-width="1.1"/>
  <path d="M1259.6 11.8 L1267.6 19.8 M1267.6 11.8 L1259.6 19.8" stroke="#333" stroke-width="0.95"/>
</svg>
<div id="swrib"></div>
<!--RIBBON-->
<svg class="abs" style="left:0;top:0" width="645" height="688" viewBox="632 2 645 688" fill="none" stroke-linecap="round" stroke-linejoin="round">
<defs><filter id="blurA" x="-20%" y="-20%" width="140%" height="140%"><feGaussianBlur stdDeviation="1.6"/></filter></defs>
<g id="ddarrows" fill="#333" stroke="none">
  <path d="M675.5 33.9 h2.8 l-1.4 1.6z M653.2 48.8 h2.8 l-1.4 1.6z M653.2 64.4 h2.8 l-1.4 1.6z M697.5 64.4 h2.8 l-1.4 1.6z M711.1 68.2 h2.8 l-1.4 1.6z M727.8 68.2 h2.8 l-1.4 1.6z"/>
  <path d="M755.6 33.9 h2.8 l-1.4 1.6z M777.5 33.9 h2.8 l-1.4 1.6z M799.8 33.9 h2.8 l-1.4 1.6z M755.6 49.2 h2.8 l-1.4 1.6z M777.5 49.2 h2.8 l-1.4 1.6z M799.8 49.2 h2.8 l-1.4 1.6z M755.6 64.4 h2.8 l-1.4 1.6z"/>
  <path d="M854.2 68.2 h2.8 l-1.4 1.6z"/>
  <path d="M675.5 49.2 h2.8 l-1.4 1.6z M675.5 64.4 h2.8 l-1.4 1.6z M799.8 64.4 h2.8 l-1.4 1.6z M830.5 68.2 h2.8 l-1.4 1.6z M968.6 49.2 h2.8 l-1.4 1.6z M968.6 64.4 h2.8 l-1.4 1.6z M988.6 68.2 h2.8 l-1.4 1.6z M1047.6 68.2 h2.8 l-1.4 1.6z" fill="#b8b8bc"/>
</g>
<!-- home -->
<g stroke="#2e5878" stroke-width="1.1">
  <path d="M638.4 35 L643.8 29.8 L649.2 35 M640 34 V40.2 H647.6 V34"/>
  <rect x="642.6" y="36" width="2.6" height="4.2" stroke-width="0.8" fill="#cfe0ee"/>
</g>
<!-- save -->
<rect x="660" y="29" width="11.4" height="11.4" rx="0.8" fill="#1d5f92" stroke="#174a74" stroke-width="0.6"/>
<rect x="662" y="29.4" width="7.2" height="5" fill="#9ec4e0" stroke="none"/>
<rect x="663" y="36.2" width="5.4" height="4" fill="#dfe8f0" stroke="none"/>
<!-- traffic light -->
<rect x="684.8" y="29" width="5.4" height="11.6" rx="2.2" fill="#3a3a32" stroke="#222" stroke-width="0.5"/>
<circle cx="687.5" cy="31.8" r="1.7" fill="#e03020"/><circle cx="687.5" cy="37.6" r="1.7" fill="#2e9a30"/>
<!-- new doc -->
<path d="M639.6 45 H645.4 L648 47.6 V56 H639.6 Z M645.4 45 V47.6 H648" fill="#f4f4f4" stroke="#8a8a8e" stroke-width="0.8"/>
<!-- undo greyed -->
<path d="M662.8 48.4 Q668.4 45.6 669.4 50 Q669.6 53 666.4 54" stroke="#d4d4d8" stroke-width="1.6"/>
<path d="M662.8 63.6 H669.6 M662.8 63.6 l2.4 -2 M662.8 63.6 l2.4 2 M669.6 63.6 V67" stroke="#d4d4d8" stroke-width="1.6"/>
<!-- list -->
<g stroke="none">
  <rect x="682.4" y="44.6" width="10.4" height="10.6" fill="#eaf0f6" stroke="#5a7894" stroke-width="0.7"/>
  <rect x="683.4" y="45.8" width="2.4" height="2" fill="#2e6890"/><rect x="683.4" y="49" width="2.4" height="2" fill="#2e6890"/><rect x="683.4" y="52.2" width="2.4" height="2" fill="#2e6890"/>
  <rect x="686.8" y="45.8" width="5" height="2" fill="#7aa0be"/><rect x="686.8" y="49" width="5" height="2" fill="#7aa0be"/><rect x="686.8" y="52.2" width="5" height="2" fill="#7aa0be"/>
</g>
<!-- open -->
<path d="M638.8 61 H642.4 L643.6 62.4 H647.4 V70.6 H638.8 Z" fill="#f0ead0" stroke="#8a8a70" stroke-width="0.7"/>
<path d="M638.8 70.6 L641.2 64.8 H650.4 L647.4 70.6 Z" fill="#dfe6c8" stroke="#7a8a60" stroke-width="0.7"/>
<path d="M642.6 59.6 Q646.2 59.8 646.8 63.4 M645 62.4 L646.9 64.4 L648.6 61.8" stroke="#2e9a30" stroke-width="1.3"/>
<!-- gear -->
<g stroke="#555" stroke-width="0.9">
  <circle cx="687.5" cy="65" r="2"/>
  <path d="M686.5 59.6 h2 l0.4 1.4 l1.4 0.6 l1.3 -0.7 l1.4 1.4 l-0.7 1.3 l0.6 1.4 l1.4 0.4 v2 l-1.4 0.4 l-0.6 1.4 l0.7 1.3 l-1.4 1.4 l-1.3 -0.7 l-1.4 0.6 l-0.4 1.4 h-2 l-0.4 -1.4 l-1.4 -0.6 l-1.3 0.7 l-1.4 -1.4 l0.7 -1.3 l-0.6 -1.4 l-1.4 -0.4 v-2 l1.4 -0.4 l0.6 -1.4 l-0.7 -1.3 l1.4 -1.4 l1.3 0.7 l1.4 -0.6 z"/>
</g>
<!-- sketch big -->
<path d="M719 29.6 H708.6 Q706.4 29.6 706.4 31.8 V37.4 Q706.4 40.4 709.4 40.4 H719" stroke="#2e5878" stroke-width="1"/>
<path d="M708 30.4 H719 V39.6 H709.4 Q707.2 39.6 707.2 37.4 Z" fill="#e4edf4" stroke="none"/>
<!-- smart dim -->
<path d="M723.6 35.2 L729.4 29.8 L735 35" stroke="#2a2a2a" stroke-width="1"/>
<path d="M724 36 L729 40.6" stroke="#2e5878" stroke-width="1.1"/>
<!-- line -->
<path d="M740.6 39.8 L751 29.6" stroke="#2e5878" stroke-width="1.1"/>
<!-- circle -->
<circle cx="768" cy="34.6" r="5.6" stroke="#2e5878" stroke-width="1.1"/><circle cx="768" cy="34.6" r="0.5" fill="#2e5878" stroke="none"/>
<!-- spline -->
<path d="M784.8 38.8 Q785.2 28 788.6 29.8 Q790.6 31 790.4 36 Q790.6 41 793 39 Q795 36.6 795.2 29.4" stroke="#2e5878" stroke-width="1.2"/>
<!-- greyed mirror-ish -->
<path d="M808.4 31.2 L815 29 V38 L808.4 40.2 Z M810.6 30.4 V39.4 M812.8 29.8 V38.8" stroke="#c6c6ca" stroke-width="0.9"/>
<!-- rectangle -->
<rect x="740.6" y="45.8" width="10.6" height="7.6" fill="#eef4f8" stroke="#2e5878" stroke-width="1.1"/>
<!-- arc -->
<path d="M763 54 Q763.4 47 768.2 47 Q773 47.2 773.4 54" stroke="#2e5878" stroke-width="1.2"/>
<!-- ellipse -->
<ellipse cx="789.8" cy="49.8" rx="6" ry="4.2" transform="rotate(-35 789.8 49.8)" stroke="#2e5878" stroke-width="1.1"/><circle cx="789.8" cy="49.8" r="0.5" fill="#2e5878"/>
<!-- text A icon -->
<path d="M807.4 55.2 L811.8 44.6 L816.4 55.2 M809 51.6 H814.8" stroke="#7f97a8" stroke-width="1.3"/>
<!-- slot -->
<rect x="740.4" y="61.4" width="11" height="7.2" rx="3.6" fill="#eef4f8" stroke="#2e5878" stroke-width="1.1"/><circle cx="743.8" cy="65" r="0.5" fill="#2e5878"/><circle cx="748" cy="65" r="0.5" fill="#2e5878"/>
<!-- polygon -->
<path d="M762.4 65 L765.2 60.2 H770.8 L773.6 65 L770.8 69.8 H765.2 Z" stroke="#2e5878" stroke-width="1.1"/><circle cx="768" cy="65" r="0.5" fill="#2e5878"/>
<!-- fillet greyed -->
<path d="M786 61.4 H792 Q794.4 61.4 794.4 63.8 V68.6" stroke="#dadade" stroke-width="1"/>
<!-- point -->
<rect x="810.4" y="63.8" width="3.2" height="3.2" fill="#4a7a94" stroke="none"/>
<!-- white blurred artifacts -->
<g filter="url(#blurA)" fill="#fbfbfc" stroke="none" opacity="0.9">
  <rect x="977" y="42" width="26" height="14"/><rect x="1008" y="41" width="30" height="16"/><rect x="1043" y="41" width="12" height="16"/>
  <rect x="1126" y="26" width="30" height="36"/><rect x="1174" y="24" width="80" height="38"/>
  <rect x="826" y="44" width="14" height="12"/><rect x="869" y="44" width="13" height="12"/>
</g>
<!-- trim greyed -->
<path d="M826.4 30.2 L834 38.6 M829 38.8 L836 31 M827 40.2 H837" stroke="#d2d2d6" stroke-width="1.4"/>
<!-- convert entities cube -->
<path d="M850.6 32 L855.8 29.6 L861 32 V38.6 L855.8 41 L850.6 38.6 Z" fill="#f4f6f8" stroke="#5a5a5e" stroke-width="0.8"/>
<path d="M850.6 32 L855.8 34.4 L861 32 M855.8 34.4 V41" stroke="#5a5a5e" stroke-width="0.8"/>
<path d="M853 33.2 L858.4 30.8" stroke="#2e5878" stroke-width="0.9"/>
<!-- offset greyed -->
<path d="M880.6 30.2 H871.6 V39.8 H880.6 M880.6 32.6 H874 V37.4 H880.6" stroke="#d6d6da" stroke-width="1"/>
<!-- surface offset -->
<path d="M887.4 33.8 L892.6 29.6 L897.6 32 L896.6 35.4 L891 39.4 L887 36.6 Z" fill="#dfe8ee" stroke="#3a6a88" stroke-width="1"/>
<path d="M889.6 34.4 L893 31.8 L895.6 33 L891.4 36.6 Z" fill="#fff" stroke="#3a6a88" stroke-width="0.6"/>
<path d="M890.6 39.2 L889.8 41" stroke="#3a6a88" stroke-width="0.8"/>
<!-- greyed list icons -->
<g stroke="#d4d4d8" stroke-width="1.2">
  <path d="M903 32 V38 M910.4 32 V38 M905 33 V37 H908.4 V33"/>
  <path d="M903.6 46.6 h2.4 v2.4 h-2.4z M907.6 46.6 h2.4 v2.4 h-2.4z M903.6 50.8 h2.4 v2.4 h-2.4z M907.6 50.8 h2.4 v2.4 h-2.4z"/>
  <path d="M904 66.8 L909 61.8 M909 61.8 H906 M909 61.8 V64.8"/>
</g>
<!-- display/delete relations greyed -->
<g stroke="#d8d8dc" stroke-width="1.2">
  <path d="M989 30 V38.4 H996 M991.6 35 l2 -1.6"/>
  <path d="M1011 31 h8 M1011 34 h5 M1013 37.6 l3 -3 M1020 30.4 l-2 6"/>
  <path d="M1029 32 l5 -2 l2 3 l-5 4 z"/>
  <rect x="1045" y="30.2" width="9.6" height="9.6" rx="1"/><circle cx="1049.8" cy="35" r="2.2"/>
</g>
<!-- rapid sketch -->
<path d="M1073 39.6 H1064.6 Q1061.6 39.6 1061.6 36.6 V30" stroke="#2e5fa0" stroke-width="1.1"/>
<path d="M1062.4 30 H1073 V38.8 H1064.8 Q1062.4 38.8 1062.4 36.4 Z" fill="#eaf0f6" stroke="none"/>
<path d="M1071.6 28.6 L1066.4 33.6 L1068.6 33.8 L1065.2 37.4 L1071.4 33 L1069.2 32.6 L1073 29 Z" fill="#f0b820" stroke="#c08a10" stroke-width="0.4"/>
<!-- instant2d -->
<path d="M1084.6 30 H1093.6 M1084.6 30 V38" stroke="#3a4a5a" stroke-width="1"/>
<path d="M1086.6 32.6 L1092.6 34.6 L1095.8 38.4 L1089.8 36.4 Z" fill="#f0c840" stroke="#8a7a20" stroke-width="0.5"/>
<path d="M1088 36 Q1091.6 39.8 1095.6 40 " stroke="#2e5fa0" stroke-width="1"/>
<path d="M1091.8 32.2 L1095.4 35" stroke="#2e5fa0" stroke-width="0.9"/>
<!-- shaded contours greyed -->
<path d="M1109.6 38 L1116 30.4 L1118 32 L1111.6 39.6 Z M1110 34.6 h5 M1112 31 v6" stroke="#d4d4d8" stroke-width="1.1"/>
<!-- collapse caret -->
<path d="M1266.6 67 L1269 64.6 L1271.4 67" stroke="#333" stroke-width="1"/>

</svg>
<div class="sep" style="left:71.4px"></div>
<div class="sep" style="left:105.8px"></div>
<div class="sep" style="left:187.8px"></div>
<div class="sep" style="left:341.3px"></div>
<div class="sep" style="left:408.5px"></div>
<div class="sep" style="left:426.6px"></div>
<div class="t rl" style="left:80.5px;top:40.3px">草图<br>绘制</div>
<div class="t rl" style="left:97.2px;top:40.3px">智能<br>尺寸</div>
<div class="t rl rg" style="left:199.9px;top:40.3px">剪裁实<br>体(T)</div>
<div class="t rl" style="left:223.6px;top:40.3px">转换实<br>体引用</div>
<div class="t rl rg" style="left:244px;top:40.3px">等距<br>实体</div>
<div class="t rl" style="left:260.3px;top:40.3px">曲面<br>上偏<br>移</div>
<div class="t rg" style="left:284px;top:29.8px;font-size:6.6px">镜向实体</div>
<div class="t rg" style="left:284px;top:44.6px;font-size:6.6px">线性草图阵列</div>
<div class="t rg" style="left:284px;top:59.8px;font-size:6.6px">移动实体</div>
<div class="t rl rg" style="left:359px;top:40.3px">显示/删<br>除几何</div>
<div class="t rl rg" style="left:391px;top:40.3px">修复<br>草图</div>
<div class="t rl rg" style="left:417.5px;top:40.3px">快速<br>捕捉</div>
<div class="t rl" style="left:435.8px;top:40.3px;font-size:6.4px">快速<br>草图</div>
<div class="t rl" style="left:458.8px;top:42.4px;font-size:5.8px;letter-spacing:-0.1px">Instant2D</div>
<div class="t rl rg" style="left:481.8px;top:40.3px">上色<br>草图<br>轮廓</div>
<!-- command manager tabs -->
<div id="swtabs">
  <div class="tb" style="left:0;width:21.8px;">特征</div>
  <div class="tb" style="left:21.8px;width:21.5px;background:#f6f6f7;color:#555;border-right:none">草图</div>
  <div class="tb" style="left:43.3px;width:21.6px;border-left:1px solid #bcbcc0">曲面</div>
  <div class="tb" style="left:64.9px;width:21.4px;">钣金</div>
  <div class="tb" style="left:86.3px;width:21.7px;">焊件</div>
  <div class="tb" style="left:108px;width:21px;border-right:none">评估</div>
</div>
<!-- feature manager -->
<div id="fm">
 <div class="abs" style="left:0;top:1px;width:116px;height:583px">
  <div id="fmtop"></div>
  <div class="abs" style="left:55.5px;top:3.6px;width:3px;height:3px;border-radius:2px;background:#c8c8cc"></div>
  <div class="abs" style="left:21.4px;top:13.2px;width:79.8px;height:14.4px;background:#d4d4d7"></div>
  <div class="abs" style="left:0;top:28.4px;width:116px;height:1px;background:#e2e2e6"></div>
  <div class="abs" style="left:0px;top:43.5px;width:116px;height:1px;background:#e6e6ea"></div>
  <div class="abs" style="left:0;top:186.5px;width:116px;height:1.5px;background:#3c6ea8"></div>
  <div class="ti" style="left:14.2px;top:45.3px;font-size:7.45px">零件1 (Default) &lt;&lt;Default&gt;_Ph</div>
  <div class="ti" style="top:58.2px">历史记录</div>
  <div class="ti" style="top:70.2px">传感器</div>
  <div class="ti" style="top:82.2px">注解</div>
  <div class="ti" style="top:94.2px">实体</div>
  <div class="ti" style="top:106.2px">曲面实体</div>
  <div class="ti" style="top:118.2px">方程式</div>
  <div class="ti" style="top:130.2px">材质 &lt;未指定&gt;</div>
  <div class="ti" style="top:142.2px">前视面</div>
  <div class="ti" style="top:154.2px">上视面</div>
  <div class="ti" style="top:166.2px">右视面</div>
  <div class="ti" style="top:178.2px">原点</div>
  <!-- scrollbar -->
  <div class="abs" style="left:11px;top:575px;width:54.5px;height:4.6px;background:#9c9c9e"></div>
 </div>
</div>
<!-- collapse handle -->
<div class="abs" style="left:116.5px;top:357px;width:4px;height:24px;background:#ececee;border:1px solid #dcdce0;border-left:none;border-radius:0 2px 2px 0;box-sizing:border-box"></div>
<div class="abs" style="left:117.4px;top:367.4px;width:0;height:0;border-top:1.6px solid transparent;border-bottom:1.6px solid transparent;border-right:1.8px solid #999"></div>
<!-- bottom tabs -->
<div id="swbot">
  <div class="abs" style="left:1px;top:1px;width:32.5px;height:7px;background:repeating-linear-gradient(90deg,#b4b4be 0 1.5px,#a4a4b0 1.5px 3px)"></div>
  <div class="abs" style="left:35.5px;top:0;width:121.3px;height:8px;background:#d6d6d9"></div>
  <div class="abs" style="left:35.5px;top:0;width:24px;height:8px;background:#fafafa"></div>
  <div class="abs" style="left:59.5px;top:0.5px;width:1px;height:7px;background:#b8b8bc"></div>
  <div class="abs" style="left:94.5px;top:0.5px;width:1px;height:7px;background:#b8b8bc"></div>
  <div class="t" style="left:39.6px;top:0.7px;font-size:7.7px;color:#222">模型</div>
  <div class="t" style="left:63px;top:0.7px;font-size:7.7px;color:#222">3D 视图</div>
  <div class="t" style="left:98px;top:0.9px;font-size:7.6px;color:#222">Motion Study 1</div>
</div>
<div id="swstat">
  <div class="t" style="left:1px;top:2.4px;font-size:7.1px;color:#111">SOLIDWORKS Premium 2022 SP5.0</div>
  <div class="t" style="left:505px;top:2.2px;font-size:7px;color:#222">在编辑 零件</div>
  <div class="t" style="left:583.5px;top:2.2px;font-size:7px;color:#222">自定义</div>
  <div class="dd" style="left:611.6px;top:5px;border-top-color:#777"></div>
</div>
<svg class="abs" style="left:0;top:0" width="645" height="688" viewBox="632 2 645 688" fill="none" stroke-linecap="round" stroke-linejoin="round">
<defs>
<radialGradient id="ball" cx="0.4" cy="0.35" r="0.7"><stop offset="0" stop-color="#fff" stop-opacity="0.7"/><stop offset="0.5" stop-color="#fff" stop-opacity="0"/></radialGradient>
<filter id="b05" x="-10%" y="-10%" width="120%" height="120%"><feGaussianBlur stdDeviation="0.4"/></filter>
</defs>
<!-- FM tab icons -->
<path d="M639.6 106 Q638.6 103.2 641.4 102.8 L644.6 104.4 Q647.8 104.6 648.6 107.6 Q649.4 110.4 646.8 111.4 Q644.8 112.2 643 110.4 L640.8 108 Q639.8 107.2 639.6 106 Z" fill="#f2c818" stroke="#b8900c" stroke-width="0.7"/>
<circle cx="642.2" cy="105.6" r="1.1" fill="#fdf0a0" stroke="#b8900c" stroke-width="0.5"/>
<rect x="658.4" y="103" width="10" height="9.6" fill="#e8f0f6" stroke="#3a5a74" stroke-width="0.8"/>
<path d="M661.2 103 V112.6 M662.6 105.4 H667 M662.6 107.8 H667 M662.6 110.2 H667" stroke="#3a5a74" stroke-width="0.8"/>
<rect x="658.8" y="103.4" width="2.2" height="8.8" fill="#4a8ab0" stroke="none"/>
<path d="M680.4 103 h3 v3 h-3z M684.6 106.2 h3 v2.6 h-3z M684.6 109.8 h3 v2.6 h-3z M681.9 106 V111 H684.6 M681.9 107.6 H684.6" stroke="#7a8a98" stroke-width="0.8"/>
<circle cx="703.1" cy="107.7" r="4.2" stroke="#222" stroke-width="1"/><path d="M703.1 101.8 V113.6 M697.2 107.7 H709" stroke="#222" stroke-width="0.9"/>
<circle cx="723.6" cy="107.7" r="5.2" fill="#2a2a2a"/>
<path d="M723.6 107.7 L718.6 106.2 A5.2 5.2 0 0 1 725 102.7 Z" fill="#2a58c0"/>
<path d="M723.6 107.7 L725 102.7 A5.2 5.2 0 0 1 728.6 109.2 Z" fill="#e8b020"/>
<path d="M723.6 107.7 L728.6 109.2 A5.2 5.2 0 0 1 721 112.2 Z" fill="#d83020"/>
<path d="M723.6 107.7 L721 112.2 A5.2 5.2 0 0 1 718.6 106.2 Z" fill="#30a040"/>
<circle cx="723.6" cy="107.7" r="5.2" fill="url(#ball)"/>
<path d="M741.4 104.6 L744 107.2 L741.4 109.8" stroke="#222" stroke-width="1.1"/>
<!-- filter -->
<path d="M636.6 119.2 H644.2 L641.4 122.6 V126 L639.4 124.8 V122.6 Z" fill="#eef2f6" stroke="#5a7a94" stroke-width="0.8"/>
<!-- root part icon -->
<path d="M635.4 135 Q634.6 132.6 637 132.4 L639.8 133.6 Q642.4 133.8 643 136.2 Q643.6 138.6 641.4 139.4 Q639.8 140 638.4 138.6 L636.4 136.6 Q635.6 136 635.4 135 Z" fill="#f2c818" stroke="#b8900c" stroke-width="0.6"/>
<circle cx="637.6" cy="134.8" r="0.9" fill="#fdf0a0" stroke="#b8900c" stroke-width="0.4"/>
<!-- expand arrow -->
<path d="M637.4 170.6 L639.4 172.2 L637.4 173.8 Z" fill="#555" stroke="none"/>
<!-- tree icons -->
<g stroke="#4a5a6a" stroke-width="0.75" fill="#f2f6fa">
  <rect x="646.4" y="144.4" width="8.4" height="7.6" rx="1"/>
  <rect x="646.4" y="156.4" width="8.4" height="7.6" rx="1"/>
  <rect x="646.4" y="168.4" width="8.4" height="7.6" rx="1"/>
  <rect x="646.4" y="180.4" width="8.4" height="7.6" rx="1"/>
  <rect x="646.4" y="192.4" width="8.4" height="7.6" rx="1"/>
  <rect x="646.4" y="204.4" width="8.4" height="7.6" rx="1"/>
</g>
<circle cx="650.8" cy="148.2" r="2" stroke="#4a5a6a" stroke-width="0.7"/><path d="M650.8 147 V148.3 H651.8" stroke="#4a5a6a" stroke-width="0.6"/>
<circle cx="650.8" cy="160.2" r="1.9" stroke="#4a5a6a" stroke-width="0.7"/><path d="M650.2 160.2 h1.4" stroke="#4a5a6a" stroke-width="0.7"/>
<path d="M649 174.6 L650.8 169.8 L652.6 174.6 M649.6 173 H652" stroke="#2a6a9a" stroke-width="0.8"/>
<rect x="649" y="182.6" width="3.6" height="3.4" fill="#4a8ab0" stroke="#2a5a80" stroke-width="0.5"/>
<path d="M648.6 197.4 Q650 193.6 653 195.4 M648.8 195.6 Q651 199.2 653.2 197.2" stroke="#2a8a9a" stroke-width="0.8"/>
<path d="M652.6 206 H649.2 L651 208.2 L649.2 210.4 H652.6" stroke="#222" stroke-width="0.8"/>
<!-- material -->
<path d="M646.4 217 H654.4 M646.4 219.6 H654.4 M646.4 222.2 H651" stroke="#333" stroke-width="0.9"/>
<path d="M646.4 216 v7" stroke="#333" stroke-width="0.9"/>
<circle cx="653" cy="223" r="1.5" fill="#333" stroke="none"/>
<!-- planes -->
<g stroke="#8a9aa8" stroke-width="0.7" fill="#fafbfc">
  <path d="M647.6 229.6 L653.6 228 V235 L647.6 236.6 Z"/>
  <path d="M647.6 241.6 L653.6 240 V247 L647.6 248.6 Z"/>
  <path d="M647.6 253.6 L653.6 252 V259 L647.6 260.6 Z"/>
</g>
<!-- origin -->
<path d="M647.6 263.4 V270.6 H654.6 M647.6 263.4 l-1 1.6 M647.6 263.4 l1 1.6 M654.6 270.6 l-1.6 -1 M654.6 270.6 l-1.6 1" stroke="#222" stroke-width="0.8"/>

<!-- heads-up toolbar -->
<g>
  <circle cx="944" cy="79.6" r="2.6" stroke="#6a7a88" stroke-width="0.9" fill="#eef4f8"/><path d="M942 81.8 L938 86" stroke="#7a6a50" stroke-width="1.4"/>
  <path d="M943.4 78.8 l1.2 1.2 M945 78 v0.1" stroke="#9aa" stroke-width="0.5"/>
  <path d="M951.4 79 L955 77.6 V86 L951.4 87.2 Z" fill="#6a9cc4" stroke="#3a5a78" stroke-width="0.6"/>
  <path d="M955.8 79 L958.6 77.8 V85.6 L955.8 86.8 Z" fill="#a8c4dc" stroke="#3a5a78" stroke-width="0.6"/>
  <path d="M959.4 77.6 L962 76.8 V84.8 L959.4 85.8 Z" fill="#6a9cc4" stroke="#3a5a78" stroke-width="0.6"/>
  <path d="M967.4 80 L973.2 80 V87.2 H967.4 Z" fill="#5a94c8" stroke="#3a5a78" stroke-width="0.6"/>
  <path d="M967.4 80 L970.4 77.2 H976.4 L973.2 80 M976.4 77.2 V84.4 L973.2 87.2" fill="#a8c8e4" stroke="#3a5a78" stroke-width="0.6"/>
  <path d="M973.4 76.8 l3.6 -0.6 M974 79 l3.4 1" stroke="#556" stroke-width="0.6"/>
  <path d="M989.6 79.4 L994.2 77.6 L999 79.4 V85.4 L994.2 87.6 L989.6 85.4 Z" fill="#b8d4e8" stroke="#3a5a78" stroke-width="0.6"/>
  <path d="M989.6 79.4 L994.2 81.4 V87.6 L989.6 85.4 Z" fill="#4a88c0" stroke="#3a5a78" stroke-width="0.5"/>
  <path d="M994.2 81.4 L999 79.4" stroke="#3a5a78" stroke-width="0.5"/>
  <path d="M1011.4 81.4 Q1016.5 76.6 1021.6 81.4 Q1016.5 86.2 1011.4 81.4 Z" fill="#e8e8e8" stroke="#555" stroke-width="0.7"/><circle cx="1016.5" cy="81.4" r="1.8" fill="#444"/><path d="M1016.5 84.4 V87" stroke="#555" stroke-width="0.8"/>
  <circle cx="1038" cy="82" r="5.4" fill="#d83828"/>
  <path d="M1038 82 L1033 80 A5.4 5.4 0 0 1 1040 77 Z" fill="#3a70d0"/>
  <path d="M1038 82 L1040 77 A5.4 5.4 0 0 1 1043.2 83.4 Z" fill="#e8b828"/>
  <path d="M1038 82 L1036 87 A5.4 5.4 0 0 1 1033 80 Z" fill="#38a848"/>
  <circle cx="1038" cy="82" r="5.4" fill="url(#ball)"/>
  <circle cx="1053.8" cy="81" r="4.8" fill="#d83828"/>
  <path d="M1053.8 81 L1049.2 79.6 A4.8 4.8 0 0 1 1055.4 76.5 Z" fill="#3a70d0"/>
  <path d="M1053.8 81 L1055.4 76.5 A4.8 4.8 0 0 1 1058.4 82.4 Z" fill="#38a848"/>
  <circle cx="1053.8" cy="81" r="4.8" fill="url(#ball)"/>
  <path d="M1048.4 84.6 H1059.4 V88.4 H1048.4 Z" fill="#444" stroke="none"/><path d="M1049.6 85.4 h2 v2 h-2z M1053 85.4 h2 v2 h-2z M1056.4 85.4 h2 v2 h-2z" fill="#e8e0a0" stroke="none"/>
  <rect x="1071" y="77.6" width="10.4" height="7" fill="#c8ccd0" stroke="#6a6e74" stroke-width="0.8"/><path d="M1076.2 84.6 V87 M1073.4 87.4 H1079" stroke="#6a6e74" stroke-width="0.9"/>
  <g fill="#999" stroke="none"><path d="M982.6 81.4 h2.4 l-1.2 1.4z M1003.8 81.4 h2.4 l-1.2 1.4z M1026 81.4 h2.4 l-1.2 1.4z M1063.2 81.4 h2.4 l-1.2 1.4z M1085.4 81.4 h2.4 l-1.2 1.4z"/></g>
</g>
<!-- doc window controls -->
<g stroke="#d0d0d4" stroke-width="0.9">
  <rect x="1201.6" y="79" width="7.6" height="7"/><path d="M1201.6 80.4 h3"/>
  <rect x="1217.6" y="79" width="7.6" height="7"/><path d="M1222 80.4 h3.2"/>
  <path d="M1233 86.6 H1239.6" stroke-width="1.2"/>
  <path d="M1249.6 80 h5.6 v4.6 h-5.6z M1248 82 v4.6 h5.6"/>
  <path d="M1263.6 79.4 L1270 86 M1270 79.4 L1263.6 86" stroke="#c0c0c4"/>
</g>
<!-- task pane tabs -->
<g>
  <rect x="1264" y="104" width="12.6" height="72" fill="#dcdce0" stroke="none"/>
  <path d="M1265.6 109.6 L1270.4 105.4 L1275.2 109.6" stroke="#2e6a70" stroke-width="1.3"/>
  <rect x="1266" y="110.4" width="9" height="8" fill="#e8e8ec" stroke="#777" stroke-width="0.6"/><circle cx="1271.4" cy="113.6" r="1.4" fill="#556" stroke="none"/>
  <path d="M1266 121 L1270.5 119.6 L1275 121 V127 L1270.5 128.6 L1266 127 Z" fill="#c8c8cc" stroke="#777" stroke-width="0.6"/>
  <path d="M1265.6 132.8 H1272.4 L1275.4 131 V137 L1272.4 139 H1265.6 Z" fill="#eaeaf0" stroke="#777" stroke-width="0.6"/>
  <rect x="1265.8" y="141.4" width="9.4" height="8.6" fill="#e8c840" stroke="#8a7a30" stroke-width="0.6"/><path d="M1267 144 h3 M1267 146.6 h6" stroke="#b03020" stroke-width="1"/><rect x="1270.6" y="142.2" width="4" height="3" fill="#4a78c0" stroke="none"/>
  <circle cx="1270.6" cy="158" r="5.4" fill="#d83828"/>
  <path d="M1270.6 158 L1265.6 156 A5.4 5.4 0 0 1 1272.6 153 Z" fill="#3a70d0"/>
  <path d="M1270.6 158 L1272.6 153 A5.4 5.4 0 0 1 1275.8 159.4 Z" fill="#e8b828"/>
  <path d="M1270.6 158 L1268.6 163 A5.4 5.4 0 0 1 1265.6 156 Z" fill="#38a848"/>
  <circle cx="1270.6" cy="158" r="5.4" fill="url(#ball)"/>
  <rect x="1265.6" y="165.6" width="10" height="9" fill="#eef2f6" stroke="#3a5a74" stroke-width="0.8"/><path d="M1268 165.6 v9 M1269.4 168 h5 M1269.4 170.2 h5 M1269.4 172.4 h5" stroke="#3a5a74" stroke-width="0.7"/><rect x="1265.9" y="165.9" width="2" height="8.4" fill="#4a8ab0" stroke="none"/>
</g>
<!-- origin triad small -->
<path d="M1065.2 371.6 V357.6" stroke="#2828c0" stroke-width="0.9"/>
<path d="M1065.2 355.6 L1063.8 358.8 H1066.6 Z" fill="#2828c0" stroke="none"/>
<path d="M1065.2 371.6 L1070 374.4" stroke="#2828c0" stroke-width="0.9"/>
<path d="M1071.6 375.4 L1068.4 374.8 L1069.8 372.6 Z" fill="#2828c0" stroke="none"/>
<path d="M1063.4 372.6 l1.8 -1 l-1.4 -0.6" stroke="#5a5ad0" stroke-width="0.5"/>
<!-- yellow highlight + cursor + triad -->
<circle cx="777" cy="618.8" r="16.9" fill="#f0ee18" filter="url(#b05)"/>
<g filter="url(#b05)">
<path d="M772 641.2 V630.4" stroke="#1a50b0" stroke-width="2"/>
<path d="M772 626.8 L769.6 631.8 H774.4 Z" fill="#2a9a40" stroke="none"/>
<path d="M772 641.2 L781 646" stroke="#c02828" stroke-width="2"/>
<path d="M784.4 648 L779 647.6 L781.2 643.6 Z" fill="#c02828" stroke="none"/>
<path d="M772 641.2 L763 646" stroke="#1a1aa8" stroke-width="2"/>
<path d="M759.6 648 L765 647.6 L762.8 643.6 Z" fill="#1a1aa8" stroke="none"/>
</g>
<text x="785.6" y="649.6" font-family="Liberation Sans, sans-serif" font-size="4.4" fill="#aaa" stroke="none">X</text>
<text x="756.2" y="650" font-family="Liberation Sans, sans-serif" font-size="4.4" fill="#99c" stroke="none">Z</text>
<text x="770.6" y="625" font-family="Liberation Sans, sans-serif" font-size="4.4" fill="#cc8" stroke="none">Y</text>
<path d="M777.6 620.6 V628.4 L779.4 626.8 L780.8 629.8 L781.8 629.3 L780.5 626.4 L782.8 626.2 Z" fill="#fff" stroke="#999" stroke-width="0.5" stroke-linejoin="miter"/>
<text x="753.6" y="669.4" font-family="'Liberation Sans','Noto Sans CJK SC',sans-serif" font-weight="bold" font-size="7.6" fill="#222" stroke="none">*等轴测</text>
<!-- status tag icon -->
<path d="M1256 683 L1260 681.4 L1264.4 685.6 L1261.4 688.4 L1257 684.6 Z" stroke="#555" stroke-width="0.8"/><circle cx="1258.6" cy="683.6" r="0.6" fill="#555" stroke="none"/>
<path d="M1261 681 L1265.6 685.2" stroke="#555" stroke-width="0.7"/>
</svg>

</div>
</body>
</html>
